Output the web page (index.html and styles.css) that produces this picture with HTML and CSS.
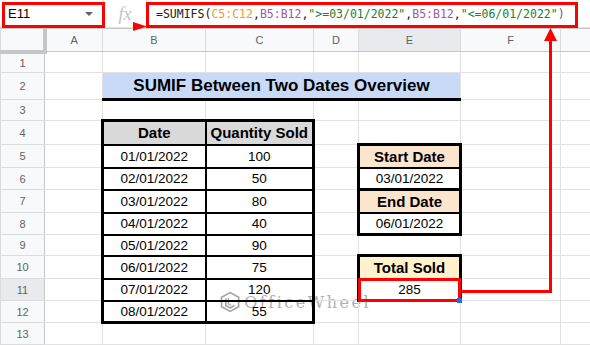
FILE: index.html
```html
<!DOCTYPE html>
<html lang="en">
<head>
  <meta charset="UTF-8">
  <title>SUMIF Between Two Dates</title>
  <link rel="stylesheet" href="styles.css">
</head>
<body>
  <!-- Formula bar -->
  <div class="formula-bar">
    <div class="name-box">
      <span>E11</span>
      <span class="caret"></span>
    </div>
    <div class="fx">fx</div>
    <div class="formula">=SUMIFS(<span class="ref-c">C5:C12</span>,<span class="ref-b">B5:B12</span>,<span class="str">"&gt;=03/01/2022"</span>,<span class="ref-b">B5:B12</span>,<span class="str">"&lt;=06/01/2022"</span><span class="paren">)</span></div>
  </div>

  <!-- Sheet grid -->
  <table class="sheet">
    <colgroup>
      <col style="width:44px"><col style="width:58px"><col style="width:103px"><col style="width:108px">
      <col style="width:45px"><col style="width:102px"><col style="width:100px"><col style="width:30px">
    </colgroup>
    <tr class="col-head" style="height:23px">
      <th class="corner"></th><th>A</th><th>B</th><th>C</th><th>D</th><th class="sel">E</th><th>F</th><th></th>
    </tr>
    <tr style="height:21px"><th class="row-head">1</th><td></td><td></td><td></td><td></td><td></td><td></td><td></td></tr>
    <tr style="height:27px"><th class="row-head">2</th><td></td><td colspan="4" class="title">SUMIF Between Two Dates Overview</td><td></td><td></td></tr>
    <tr style="height:21px"><th class="row-head">3</th><td></td><td></td><td></td><td></td><td></td><td></td><td></td></tr>
    <tr style="height:24px"><th class="row-head">4</th><td></td><td class="hd t-top t-left">Date</td><td class="hd t-top t-right">Quantity Sold</td><td></td><td></td><td></td><td></td></tr>
    <tr style="height:23px"><th class="row-head">5</th><td></td><td class="dt t-left">01/01/2022</td><td class="dt t-right">100</td><td></td><td class="peach box-top">Start Date</td><td></td><td></td></tr>
    <tr style="height:22px"><th class="row-head">6</th><td></td><td class="dt t-left">02/01/2022</td><td class="dt t-right">50</td><td></td><td class="side">03/01/2022</td><td></td><td></td></tr>
    <tr style="height:23px"><th class="row-head">7</th><td></td><td class="dt t-left">03/01/2022</td><td class="dt t-right">80</td><td></td><td class="peach box-top">End Date</td><td></td><td></td></tr>
    <tr style="height:22px"><th class="row-head">8</th><td></td><td class="dt t-left">04/01/2022</td><td class="dt t-right">40</td><td></td><td class="side box-bottom">06/01/2022</td><td></td><td></td></tr>
    <tr style="height:21px"><th class="row-head">9</th><td></td><td class="dt t-left">05/01/2022</td><td class="dt t-right">90</td><td></td><td></td><td></td><td></td></tr>
    <tr style="height:23px"><th class="row-head">10</th><td></td><td class="dt t-left">06/01/2022</td><td class="dt t-right">75</td><td></td><td class="yellow box-top">Total Sold</td><td></td><td></td></tr>
    <tr style="height:22px"><th class="row-head sel">11</th><td></td><td class="dt t-left">07/01/2022</td><td class="dt t-right">120</td><td></td><td class="side box-bottom">285</td><td></td><td></td></tr>
    <tr style="height:22px"><th class="row-head">12</th><td></td><td class="dt t-left t-bottom">08/01/2022</td><td class="dt t-right t-bottom">55</td><td></td><td></td><td></td><td></td></tr>
    <tr style="height:22px"><th class="row-head">13</th><td></td><td></td><td></td><td></td><td></td><td></td><td></td></tr>
    <tr style="height:10px"><th class="row-head"></th><td></td><td></td><td></td><td></td><td></td><td></td><td></td></tr>
  </table>

  <!-- Watermark, sits under the cell text -->
  <div class="watermark">
    <svg width="28" height="28" viewBox="0 0 26 26">
      <path d="M13 2 L23 7.5 L23 18.5 L13 24 L3 18.5 L3 7.5 Z" fill="none" stroke="#a6a6a6" stroke-width="2"/>
      <path d="M8 9 L8 17 L13 20 L18 17" fill="none" stroke="#a6a6a6" stroke-width="2"/>
      <path d="M11 8 L11 15 L14 17" fill="none" stroke="#a6a6a6" stroke-width="1.6"/>
    </svg>
    <span>OfficeWheel</span>
  </div>

  <!-- Annotations -->
  <svg class="marks" width="590" height="345" viewBox="0 0 590 345">
    <rect x="3.5" y="3.5" width="100" height="23" fill="none" stroke="#f00" stroke-width="3"/>
    <rect x="147.5" y="3.5" width="429" height="23" fill="none" stroke="#f00" stroke-width="3"/>
    <polygon points="133,22 133,31 147,26.5" fill="#f00"/>
    <rect x="359.5" y="279.5" width="100" height="21" fill="none" stroke="#f00" stroke-width="3"/>
    <rect x="457" y="298" width="5" height="5" fill="#1a73e8"/>
    <polyline points="461,291.5 550.5,291.5 550.5,38" fill="none" stroke="#f00" stroke-width="3"/>
    <polygon points="544,41 557,41 550.5,28" fill="#f00"/>
  </svg>
</body>
</html>
```

FILE: styles.css
```css
body {
  margin: 0;
  width: 590px;
  height: 345px;
  overflow: hidden;
  background: #fff;
  font-family: "Liberation Sans", Arial, sans-serif;
  position: relative;
}
.formula-bar {
  display: flex;
  height: 28px;
  align-items: stretch;
  border-bottom: 1px solid #e2e2e2;
  box-sizing: border-box;
}
.name-box {
  width: 104px;
  display: flex;
  align-items: center;
  justify-content: space-between;
  padding: 0 10px 0 8px;
  box-sizing: border-box;
  font-size: 13px;
  color: #000;
  border-right: 1px solid #e2e2e2;
}
.caret {
  width: 0;
  height: 0;
  border-left: 4px solid transparent;
  border-right: 4px solid transparent;
  border-top: 4px solid #5f6368;
}
.fx {
  width: 42px;
  text-align: center;
  line-height: 28px;
  font-family: "Liberation Serif", serif;
  font-style: italic;
  font-size: 18px;
  color: #c4c4c4;
  border-right: 1px solid #e2e2e2;
}
.formula {
  flex: 1;
  padding-left: 9px;
  line-height: 28px;
  font-family: "DejaVu Sans Mono", monospace;
  font-size: 11.5px;
  color: #202124;
  white-space: nowrap;
}
.ref-c { color: #f29a2e; }
.ref-b { color: #9b59a8; }
.str { color: #188038; }
.paren { color: #5f6368; }

.sheet {
  border-collapse: collapse;
  table-layout: fixed;
  width: 590px;
}
.sheet th, .sheet td {
  border: 1px solid #e2e2e2;
  padding: 0;
  overflow: hidden;
  white-space: nowrap;
}
.col-head th {
  background: #f8f9fa;
  color: #5f6368;
  font-weight: normal;
  font-size: 11px;
  border-color: #c7c7c7 #dadce0;
}
.row-head {
  background: #f8f9fa;
  color: #5f6368;
  font-weight: normal;
  font-size: 11px;
  border-color: #dadce0 #c7c7c7 #dadce0 #dadce0 !important;
}
.sheet .sel {
  background: #e8eaed;
}
.sheet .corner {
  border-right: 4px solid #c4c7c5;
  border-bottom: 4px solid #c4c7c5;
}
.sheet td {
  font-size: 13.5px;
  text-align: center;
  color: #000;
}
.sheet .title {
  background: #c9daf8;
  font-weight: bold;
  font-size: 17px;
  border-bottom: 3px solid #000;
}
.sheet .hd {
  background: #d9d9d9;
  font-weight: bold;
  font-size: 15px;
  border: 2px solid #000;
}
.sheet .dt {
  border: 2px solid #000;
}
.sheet .t-top { border-top-width: 3px; }
.sheet .t-left { border-left-width: 3px; }
.sheet .t-right { border-right-width: 3px; }
.sheet .t-bottom { border-bottom-width: 3px; }

.sheet .peach, .sheet .yellow, .sheet .side {
  border: 2px solid #000;
  border-left-width: 3px;
  border-right-width: 3px;
}
.sheet .peach {
  background: #fce5cd;
  font-weight: bold;
  font-size: 15px;
}
.sheet .yellow {
  background: #fff2cc;
  font-weight: bold;
  font-size: 15px;
}
.sheet .box-top { border-top-width: 3px; }
.sheet .box-bottom { border-bottom-width: 3px; }

.watermark {
  position: absolute;
  z-index: -1;
  left: 219px;
  top: 286px;
  width: 152px;
  height: 32px;
  display: flex;
  align-items: center;
  gap: 3px;
}
.watermark span {
  font-family: "DejaVu Serif", serif;
  font-size: 16px;
  letter-spacing: 2.5px;
  color: #b0b0b0;
}
.marks {
  position: absolute;
  left: 0;
  top: 0;
  pointer-events: none;
}
```
